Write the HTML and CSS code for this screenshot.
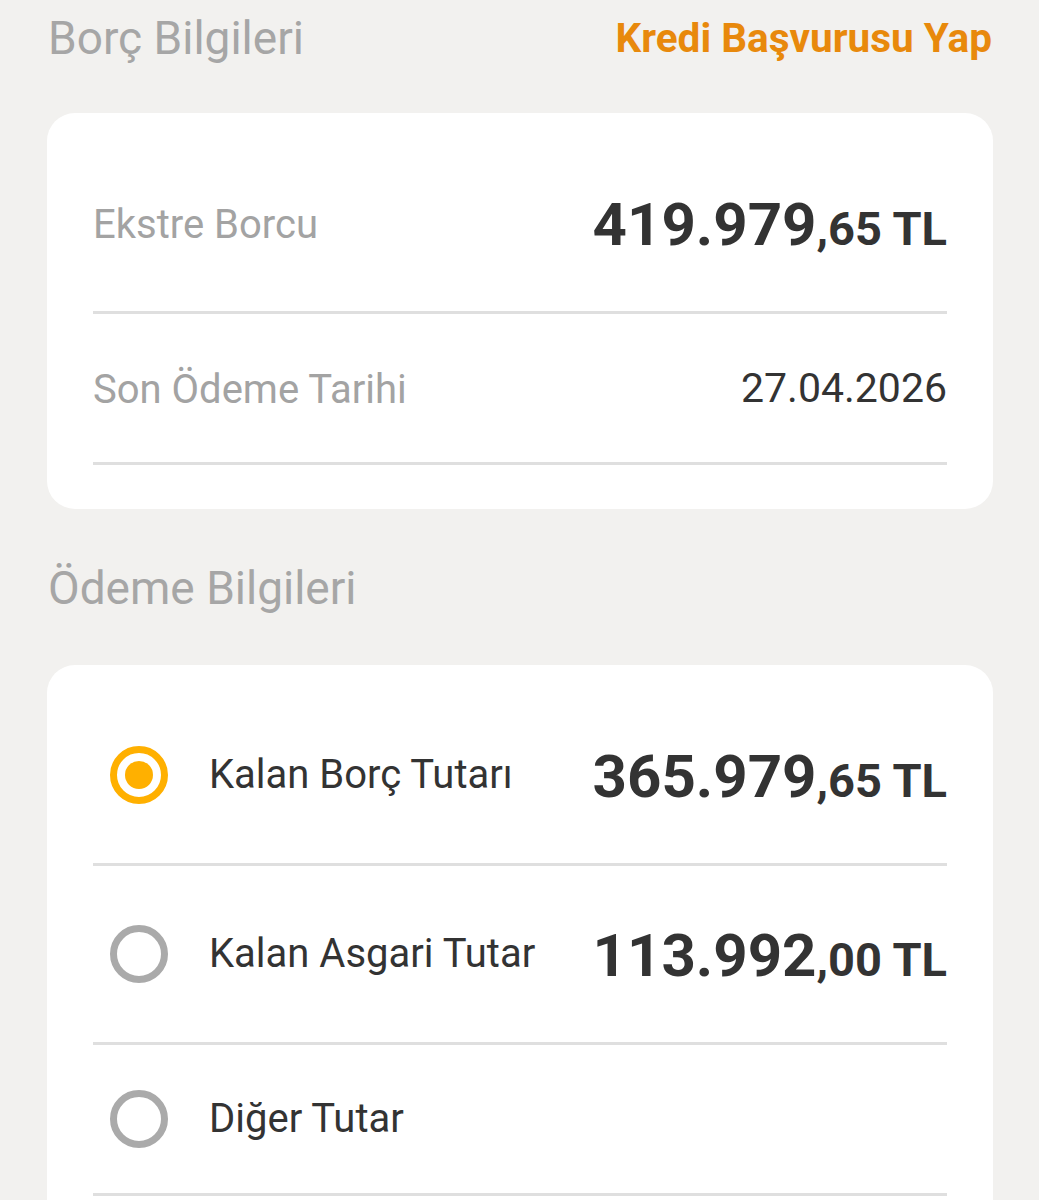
FILE: index.html
```html
<!DOCTYPE html>
<html lang="tr">

<head>
    <meta charset="UTF-8">
    <meta name="viewport" content="width=device-width, initial-scale=1.0">
    <title>Borç Bilgileri</title>
    <link rel="stylesheet" href="styles.css">
</head>

<body>
    <div class="section-head first">
        <h2>Borç Bilgileri</h2>
        <a class="link" href="#">Kredi Başvurusu Yap</a>
    </div>

    <div class="card">
        <div class="row">
            <span class="label">Ekstre Borcu</span>
            <span class="amount">419.979<small>,65 TL</small></span>
        </div>
        <div class="row">
            <span class="label">Son Ödeme Tarihi</span>
            <span class="value">27.04.2026</span>
        </div>
    </div>

    <div class="section-head">
        <h2>Ödeme Bilgileri</h2>
    </div>

    <div class="card">
        <div class="row">
            <span class="radio checked"></span>
            <span class="option">Kalan Borç Tutarı</span>
            <span class="amount">365.979<small>,65 TL</small></span>
        </div>
        <div class="row">
            <span class="radio"></span>
            <span class="option">Kalan Asgari Tutar</span>
            <span class="amount">113.992<small>,00 TL</small></span>
        </div>
        <div class="row">
            <span class="radio"></span>
            <span class="option">Diğer Tutar</span>
        </div>
    </div>
</body>

</html>
```

FILE: styles.css
```css
body {
    margin: 0;
    padding: 0 46px 0 47px;
    background-color: #f2f1ef;
    font-family: Roboto, "Liberation Sans", sans-serif;
    color: #333333;
}

.section-head {
    display: flex;
    justify-content: space-between;
    align-items: center;
    height: 52px;
    margin: 53px 0 51px;
}

.section-head.first {
    margin-top: 12px;
    margin-bottom: 49px;
}

h2 {
    margin: 0 0 0 1px;
    font-size: 46px;
    font-weight: normal;
    color: #a6a6a6;
}

.link {
    font-size: 40.5px;
    font-weight: bold;
    color: #e8890c;
    text-decoration: none;
    margin-right: 1px;
}

.card {
    background-color: #ffffff;
    border-radius: 28px;
    padding: 22px 46px 44px;
}

.row {
    display: flex;
    align-items: center;
    padding: 50px 0;
    border-bottom: 3px solid #dfdfdf;
    line-height: 44px;
}

.label {
    flex: 1;
    font-size: 40px;
    color: #a3a3a3;
    padding-top: 4px;
}

.value {
    font-size: 41px;
    color: #333333;
}

.amount {
    font-size: 60px;
    font-weight: bold;
    line-height: 72px;
    padding-top: 4px;
    color: #333333;
}

.amount small {
    font-size: 47px;
    line-height: 1;
}

.option {
    flex: 1;
    font-size: 40px;
    color: #333333;
}

.radio {
    box-sizing: border-box;
    width: 58px;
    height: 58px;
    margin: -5px 41px -5px 17px;
    border: 7px solid #aaaaaa;
    border-radius: 50%;
    display: flex;
    align-items: center;
    justify-content: center;
}

.radio.checked {
    border-color: #ffb000;
}

.radio.checked::after {
    content: "";
    width: 28px;
    height: 28px;
    border-radius: 50%;
    background-color: #ffb000;
}
```
